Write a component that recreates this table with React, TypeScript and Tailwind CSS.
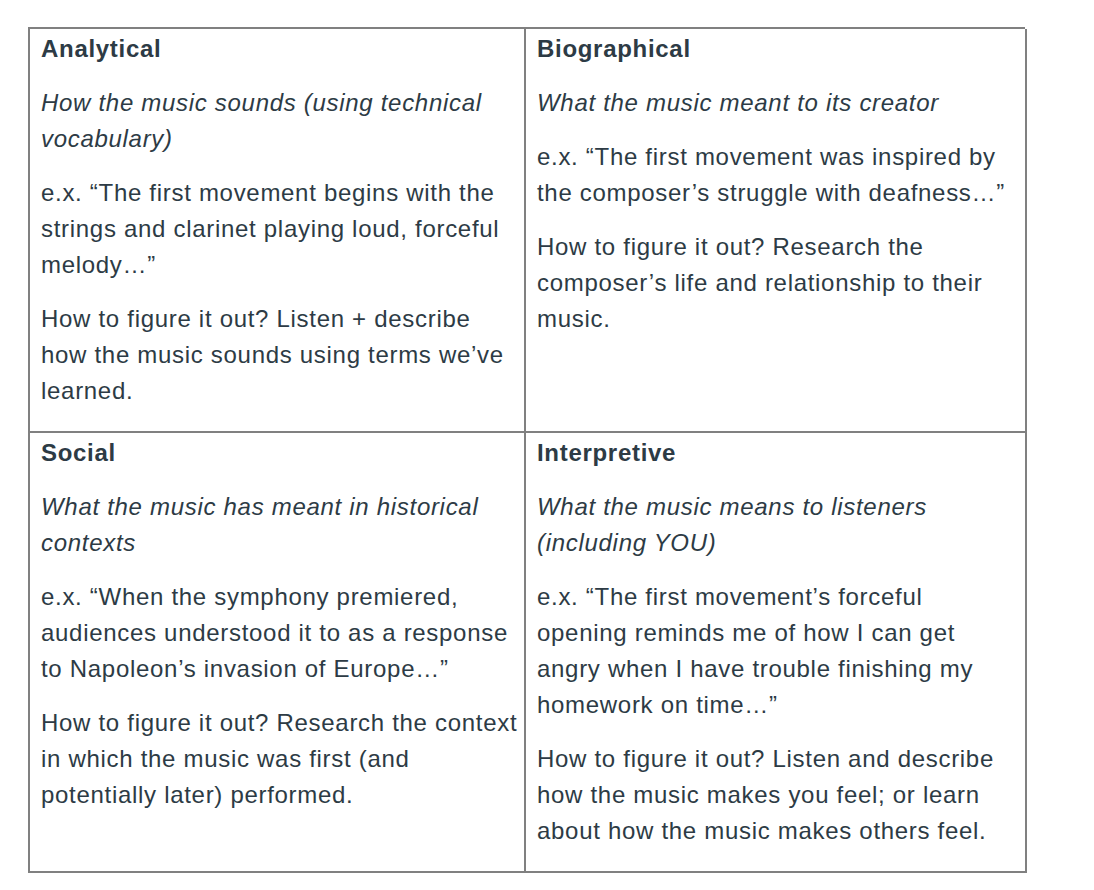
export default function App() {
  const cells = [
    {
      title: "Analytical",
      sub: "How the music sounds (using technical vocabulary)",
      ex: "e.x. “The first movement begins with the strings and clarinet playing loud, forceful melody…”",
      how: "How to figure it out? Listen + describe how the music sounds using terms we’ve learned.",
    },
    {
      title: "Biographical",
      sub: "What the music meant to its creator",
      ex: "e.x. “The first movement was inspired by the composer’s struggle with deafness…”",
      how: "How to figure it out? Research the composer’s life and relationship to their music.",
    },
    {
      title: "Social",
      sub: "What the music has meant in historical contexts",
      ex: "e.x. “When the symphony premiered, audiences understood it to as a response to Napoleon’s invasion of Europe…”",
      how: "How to figure it out? Research the context in which the music was first (and potentially later) performed.",
    },
    {
      title: "Interpretive",
      sub: "What the music means to listeners (including YOU)",
      ex: "e.x. “The first movement’s forceful opening reminds me of how I can get angry when I have trouble finishing my homework on time…”",
      how: "How to figure it out? Listen and describe how the music makes you feel; or learn about how the music makes others feel.",
    },
  ];
  return (
    <div className="min-h-[890px] w-[1094px] bg-white pt-[27px] pl-[28px]" style={{ fontFamily: '"Liberation Sans", Arial, sans-serif' }}>
      <div className="grid w-[997px] grid-cols-[496px_501px] border-l-2 border-t-2 border-[#808080] text-[24px] leading-[36px] tracking-[0.7px] text-[#2d3b45]">
        {cells.map((c) => (
          <div key={c.title} className="border-b-2 border-r-2 border-[#808080] pl-[11px] pr-[5px] pt-[2px] pb-[22px]">
            <p className="mb-[18px] font-bold">{c.title}</p>
            <p className="mb-[18px] italic">{c.sub}</p>
            <p className="mb-[18px]">{c.ex}</p>
            <p>{c.how}</p>
          </div>
        ))}
      </div>
    </div>
  );
}
